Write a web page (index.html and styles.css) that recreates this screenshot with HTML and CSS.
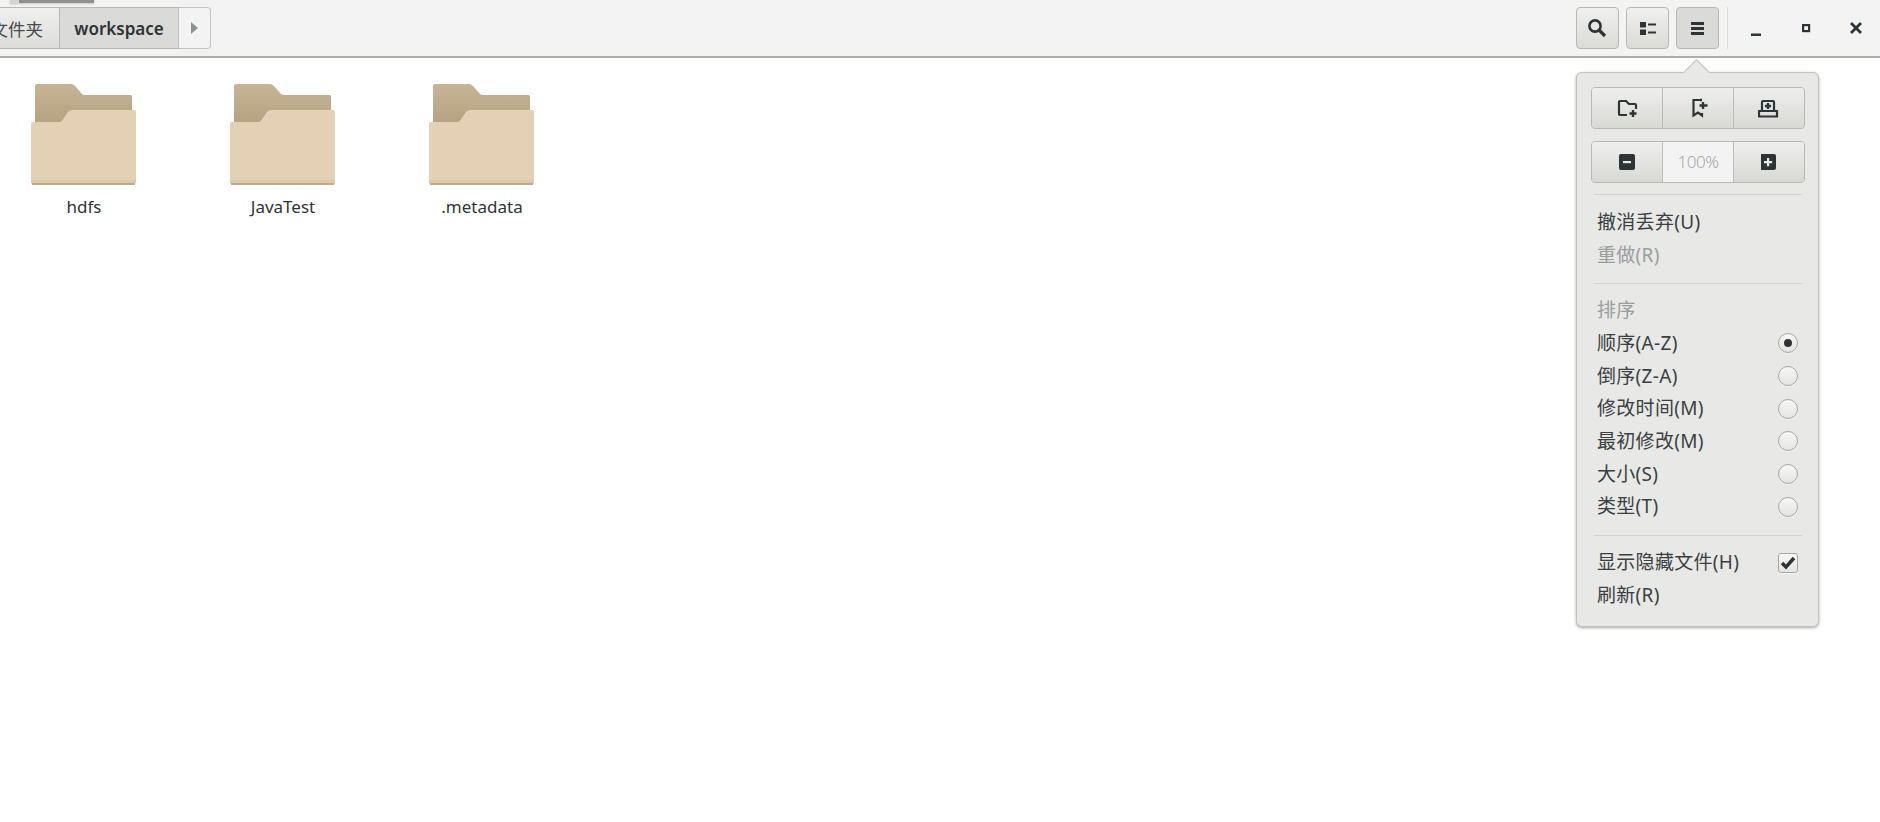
FILE: index.html
```html
<!DOCTYPE html>
<html lang="zh">
<head>
<meta charset="utf-8">
<title>workspace</title>
<link rel="stylesheet" href="styles.css">
</head>
<body>
<svg class="defs" width="0" height="0">
  <defs>
    <linearGradient id="back" x1="0" y1="0" x2="0" y2="1"><stop offset="0" stop-color="#c6b594"/><stop offset="1" stop-color="#b3a080"/></linearGradient>
    <symbol id="folder" viewBox="0 0 108 104">
      <path d="M5 2a2 2 0 0 1 2-2h34q2 0 4 2l7 8q1 1 3 1h46a2 2 0 0 1 1 2v30H5z" fill="url(#back)"/>
      <path d="M3 38h26q2 0 3-1.500l6-8.500q2-2 4-2h62a2 2 0 0 1 2 2v70a2 2 0 0 1-2 2H3a2 2 0 0 1-2-2V40a2 2 0 0 1 2-2z" fill="#e4d1b5"/>
      <rect x="1" y="96" width="105" height="3" fill="#dcc8ab"/>
      <rect x="2" y="99" width="103" height="2" fill="#b9ab95"/>
    </symbol>
  </defs>
</svg>
<div class="tooltip-sliver"><div class="tooltip-inner"></div></div>
<header class="toolbar">
  <nav class="path">
    <button class="crumb crumb-parent">文件夹</button>
    <button class="crumb crumb-current">workspace</button>
    <button class="crumb crumb-next"><svg width="8" height="12" viewBox="0 0 8 12"><path d="M0 0l7 6-7 6z" fill="#8e9192"/></svg></button>
  </nav>
  <div class="tools">
    <button class="tool"><svg width="20" height="20" viewBox="1 0 20 20" fill="none" stroke="#2e3436" stroke-width="2.600"><circle cx="8" cy="8" r="5.600"/><path d="M12 12l6 6" stroke-width="3.200"/></svg></button>
    <button class="tool"><svg width="16" height="13" viewBox="0 0 16 13" fill="#2e3436"><rect width="6" height="5.500"/><rect y="7.500" width="6" height="5.500"/><rect x="8" y="1.500" width="8" height="2"/><rect x="8" y="9.500" width="8" height="2"/></svg></button>
    <button class="tool tool-active"><svg width="13" height="13" viewBox="0 0 13 13" fill="#2e3436"><rect width="13" height="3"/><rect y="5" width="13" height="3"/><rect y="10" width="13" height="3"/></svg></button>
    <span class="tool-sep"></span>
    <div class="winctl">
      <svg class="w-min" width="12" height="12" viewBox="0 0 12 12"><rect x="1" y="9.500" width="10" height="2.500" fill="#2e3436"/></svg>
      <svg class="w-max" width="9" height="9" viewBox="0 0 9 9" fill="none" stroke="#2e3436" stroke-width="2.200"><rect x="1.100" y="1.100" width="6" height="6"/></svg>
      <svg class="w-close" width="12" height="12" viewBox="0 0 12 12" stroke="#2e3436" stroke-width="2.800"><path d="M1 1l10 10M11 1L1 11"/></svg>
    </div>
  </div>
</header>
<main class="files">
  <figure class="file">
    <svg class="folder" width="108" height="104"><use href="#folder"/></svg>
    <figcaption>hdfs</figcaption>
  </figure>
  <figure class="file">
    <svg class="folder" width="108" height="104"><use href="#folder"/></svg>
    <figcaption>JavaTest</figcaption>
  </figure>
  <figure class="file">
    <svg class="folder" width="108" height="104"><use href="#folder"/></svg>
    <figcaption>.metadata</figcaption>
  </figure>
</main>
<aside class="popover">
  <span class="arrow"></span>
  <div class="linked">
    <button class="seg"><svg width="22" height="19" viewBox="-1 0 22 19" fill="none" stroke="#2e3436" stroke-width="2.200"><path d="M10 16H3a1 1 0 0 1-1-1V3a1 1 0 0 1 1-1h6l3 3h6q1 0 1 1v4"/><path d="M16 11v7M12.500 14.500h7" stroke-width="2.400"/></svg></button>
    <button class="seg"><svg width="20" height="20" viewBox="-3 0 20 20" fill="none" stroke="#2e3436" stroke-width="2.200"><path d="M9 2H2.500v15.500l4.500-3 4 3V15"/><path d="M9 2h2M12 4v7M8.500 7.500h8" stroke-width="2.400"/></svg></button>
    <button class="seg"><svg width="22" height="19" viewBox="1 0 22 19" fill="none" stroke="#2e3436" stroke-width="2.200"><path d="M5 12V3q0-1 1-1h10q1 0 1 1v9"/><path d="M2 12h18v5.500H2z"/><path d="M11 4v6M8 7h6" stroke-width="2.400"/></svg></button>
  </div>
  <div class="linked">
    <button class="seg"><svg width="16" height="16" viewBox="0 0 16 16"><rect width="16" height="16" rx="2" fill="#2e3436"/><rect x="4" y="7" width="8" height="2.200" fill="#e8e8e7"/></svg></button>
    <span class="zoom-level">100%</span>
    <button class="seg"><svg width="16" height="16" viewBox="1 0 16 16"><rect width="16" height="16" rx="2" fill="#2e3436"/><path d="M4 7h3V4h2.200v3h3v2.200h-3v3H7v-3H4z" fill="#e8e8e7"/></svg></button>
  </div>
  <hr class="sep sep-first">
  <div class="item">撤消丢弃(U)</div>
  <div class="item item-off">重做(R)</div>
  <hr class="sep">
  <div class="item item-off">排序</div>
  <div class="item">顺序(A-Z)<span class="radio radio-on"></span></div>
  <div class="item">倒序(Z-A)<span class="radio"></span></div>
  <div class="item">修改时间(M)<span class="radio"></span></div>
  <div class="item">最初修改(M)<span class="radio"></span></div>
  <div class="item">大小(S)<span class="radio"></span></div>
  <div class="item">类型(T)<span class="radio"></span></div>
  <hr class="sep">
  <div class="item">显示隐藏文件(H)<span class="check"><svg width="16" height="14" viewBox="0 0 16 14" fill="none" stroke="#2e3436" stroke-width="3.400"><path d="M2 7l4 4 8-9"/></svg></span></div>
  <div class="item">刷新(R)</div>
</aside>
</body>
</html>
```

FILE: styles.css
```css
* { box-sizing: border-box; }
html, body { margin: 0; height: 100%; }
body {
  background: #fff;
  color: #2e3436;
  font-family: "Noto Sans", "Noto Sans CJK SC", sans-serif;
  font-size: 17.5px;
  overflow: hidden;
  position: relative;
}
button { font: inherit; color: inherit; padding: 0; margin: 0; }
.defs { position: absolute; }

.toolbar {
  height: 58px;
  background: #f3f3f3;
  border-bottom: 2px solid #adadaa;
  display: flex;
  justify-content: space-between;
  padding-top: 7px;
}
.path { display: flex; height: 42px; margin-left: -19px; }
.crumb {
  height: 42px;
  border: 1px solid #b8b8b4;
  background: linear-gradient(#f0f0ef, #dcdcd9);
  display: flex;
  align-items: center;
  justify-content: center;
}
.crumb-parent { width: 78px; border-right: 0; border-left: 0; justify-content: flex-end; padding-right: 16px; color: #44494b; }
.crumb-current {
  width: 120px;
  background: #dadad8;
  font-weight: 600;
  font-size: 17px;
  border-left: 1px solid #b8b8b4;
  border-right: 1px solid #c4c4c0;
}
.crumb-next { width: 32px; background: #f3f3f3; border-left: 0; border-radius: 0 4px 4px 0; border-color: #c4c4c0; }

.tools { display: flex; align-items: flex-start; }
.tool {
  width: 43px;
  height: 42px;
  margin-right: 7px;
  border: 1px solid #b8b8b4;
  border-radius: 4px;
  background: linear-gradient(#f0f0ef, #dadad7);
  display: flex;
  align-items: center;
  justify-content: center;
}
.tool-active { background: #dadad8; }
.tool-sep { width: 1px; height: 42px; background: #dcdcda; margin-left: 1px; }
.winctl { display: flex; align-items: center; height: 42px; width: 152px; }
.w-min { margin-left: 22px; margin-top: 3px; }
.w-max { margin-left: 40px; margin-top: 0; }
.w-close { margin-left: 39px; }

.files { display: flex; padding: 26px 0 0 31px; }
.file { margin: 0; width: 199px; display: flex; flex-direction: column; align-items: flex-start; }
.folder { display: block; margin-left: -1px; }
.file figcaption { width: 106px; text-align: center; margin-top: 7px; line-height: 24px; font-size: 17px; }

.popover {
  position: absolute;
  left: 1576px;
  top: 72px;
  width: 243px;
  height: 555px;
  background: #e8e8e7;
  border: 1px solid #c2c2bf;
  border-radius: 6px;
  box-shadow: 0 1px 3px rgba(0,0,0,.35);
  padding: 14px 13px 0 14px;
}
.arrow {
  position: absolute;
  left: 110px;
  top: -10px;
  width: 19px;
  height: 19px;
  background: #e8e8e7;
  border-left: 1px solid #c2c2bf;
  border-top: 1px solid #c2c2bf;
  transform: rotate(45deg);
}
.linked {
  position: relative;
  display: flex;
  height: 42px;
  margin-bottom: 12px;
  border: 1px solid #b8b8b4;
  border-radius: 4px;
  overflow: hidden;
}
.seg {
  flex: 1;
  border: 0;
  border-right: 1px solid #bcbcb8;
  background: linear-gradient(#eeeeed, #d8d8d5);
  display: flex;
  align-items: center;
  justify-content: center;
}
.seg:last-child { border-right: 0; }
.zoom-level {
  flex: 1;
  background: #f3f3f3;
  border-right: 1px solid #bcbcb8;
  color: #9a9c9c;
  font-family: "Open Sans", sans-serif;
  font-weight: 300;
  text-align: center;
  line-height: 40px;
  font-size: 17px;
  letter-spacing: -0.500px;
}
.sep { border: 0; height: 1px; background: #d3d3d0; margin: 12px 3px 10px; }
.sep-first { margin-top: -1px; margin-bottom: 11px; }
.item {
  height: 32.700px;
  display: flex;
  align-items: center;
  justify-content: space-between;
  padding: 0 7px 0 6px;
  line-height: 1;
  font-size: 19px;
  letter-spacing: 0.300px;
  color: #3a3f41;
}
.item-off { color: #9a9d9e; }
.radio, .check {
  width: 20px;
  height: 20px;
  border: 1px solid #a6a6a3;
  background: linear-gradient(#f8f8f8, #e4e4e2);
  display: flex;
  align-items: center;
  justify-content: center;
  box-shadow: 0 1px 0 rgba(255,255,255,.6);
}
.radio { border-radius: 50%; }
.radio-on::after { content: ""; width: 8px; height: 8px; border-radius: 50%; background: #2e3436; }
.check { border-radius: 3px; }

.tooltip-sliver {
  position: absolute;
  left: 10px;
  top: 0;
  width: 84px;
  height: 4px;
  background: #d5d5d3;
  padding-left: 9px;
  z-index: 2;
  box-shadow: 0 0 2px rgba(0,0,0,.25);
}
.tooltip-inner { height: 3px; background: #8f8f8d; }
```
